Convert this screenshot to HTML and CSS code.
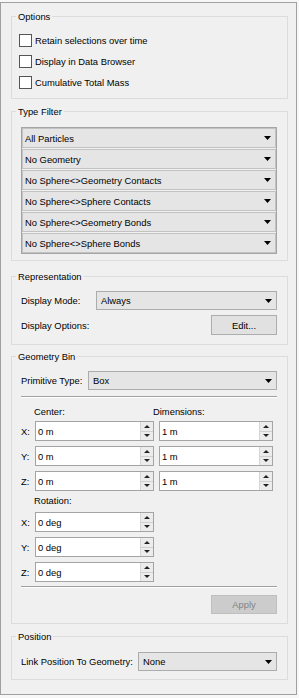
FILE: index.html
```html
<!DOCTYPE html>
<html>
<head>
<meta charset="utf-8">
<link rel="stylesheet" href="styles.css">
</head>
<body>
<div class="panel">
  <fieldset class="group g-options">
    <legend>Options</legend>
    <div class="gbody options-body">
      <label class="check"><span class="box"></span>Retain selections over time</label>
      <label class="check"><span class="box"></span>Display in Data Browser</label>
      <label class="check"><span class="box"></span>Cumulative Total Mass</label>
    </div>
  </fieldset>

  <fieldset class="group g-filter">
    <legend>Type Filter</legend>
    <div class="gbody filter-body">
      <div class="stack">
        <div class="combo"><span>All Particles</span><svg class="arrow" width="7" height="4" viewBox="0 0 7 4"><path d="M0 0H7L3.5 4Z"/></svg></div>
        <div class="combo"><span>No Geometry</span><svg class="arrow" width="7" height="4" viewBox="0 0 7 4"><path d="M0 0H7L3.5 4Z"/></svg></div>
        <div class="combo"><span>No Sphere&lt;&gt;Geometry Contacts</span><svg class="arrow" width="7" height="4" viewBox="0 0 7 4"><path d="M0 0H7L3.5 4Z"/></svg></div>
        <div class="combo"><span>No Sphere&lt;&gt;Sphere Contacts</span><svg class="arrow" width="7" height="4" viewBox="0 0 7 4"><path d="M0 0H7L3.5 4Z"/></svg></div>
        <div class="combo"><span>No Sphere&lt;&gt;Geometry Bonds</span><svg class="arrow" width="7" height="4" viewBox="0 0 7 4"><path d="M0 0H7L3.5 4Z"/></svg></div>
        <div class="combo"><span>No Sphere&lt;&gt;Sphere Bonds</span><svg class="arrow" width="7" height="4" viewBox="0 0 7 4"><path d="M0 0H7L3.5 4Z"/></svg></div>
      </div>
    </div>
  </fieldset>

  <fieldset class="group g-repr">
    <legend>Representation</legend>
    <div class="gbody repr-body">
      <div class="row">
        <span class="lbl lbl-repr">Display Mode:</span>
        <div class="combo single grow"><span>Always</span><svg class="arrow" width="7" height="4" viewBox="0 0 7 4"><path d="M0 0H7L3.5 4Z"/></svg></div>
      </div>
      <div class="row row-edit">
        <span class="lbl grow">Display Options:</span>
        <button class="btn">Edit...</button>
      </div>
    </div>
  </fieldset>

  <fieldset class="group g-geom">
    <legend>Geometry Bin</legend>
    <div class="gbody geom-body">
      <div class="row">
        <span class="lbl lbl-prim">Primitive Type:</span>
        <div class="combo single grow"><span>Box</span><svg class="arrow" width="7" height="4" viewBox="0 0 7 4"><path d="M0 0H7L3.5 4Z"/></svg></div>
      </div>
      <div class="sep sep-top"></div>
      <div class="grid grid-xyz">
        <span></span><span class="head">Center:</span><span class="head">Dimensions:</span>
        <span class="axis">X:</span>
        <div class="spin"><span class="val">0 m</span><span class="btns"><span class="up"></span><span class="down"></span></span></div>
        <div class="spin dim"><span class="val">1 m</span><span class="btns"><span class="up"></span><span class="down"></span></span></div>
        <span class="axis">Y:</span>
        <div class="spin"><span class="val">0 m</span><span class="btns"><span class="up"></span><span class="down"></span></span></div>
        <div class="spin dim"><span class="val">1 m</span><span class="btns"><span class="up"></span><span class="down"></span></span></div>
        <span class="axis">Z:</span>
        <div class="spin"><span class="val">0 m</span><span class="btns"><span class="up"></span><span class="down"></span></span></div>
        <div class="spin dim"><span class="val">1 m</span><span class="btns"><span class="up"></span><span class="down"></span></span></div>
      </div>
      <div class="grid grid-rot">
        <span></span><span class="head">Rotation:</span>
        <span class="axis">X:</span>
        <div class="spin"><span class="val">0 deg</span><span class="btns"><span class="up"></span><span class="down"></span></span></div>
        <span class="axis">Y:</span>
        <div class="spin"><span class="val">0 deg</span><span class="btns"><span class="up"></span><span class="down"></span></span></div>
        <span class="axis">Z:</span>
        <div class="spin"><span class="val">0 deg</span><span class="btns"><span class="up"></span><span class="down"></span></span></div>
      </div>
      <div class="sep sep-bot"></div>
      <div class="row row-apply">
        <button class="btn disabled">Apply</button>
      </div>
    </div>
  </fieldset>

  <fieldset class="group g-pos">
    <legend>Position</legend>
    <div class="gbody pos-body">
      <div class="row">
        <span class="lbl lbl-pos">Link Position To Geometry:</span>
        <div class="combo single grow"><span>None</span><svg class="arrow" width="7" height="4" viewBox="0 0 7 4"><path d="M0 0H7L3.5 4Z"/></svg></div>
      </div>
    </div>
  </fieldset>
</div>
</body>
</html>
```

FILE: styles.css
```css
* { box-sizing: border-box; }
html, body { margin: 0; padding: 0; }
body {
  background: #f7f7f7;
  font-family: "Liberation Sans", Arial, sans-serif;
  font-size: 9.4px;
  color: #000;
}
.panel {
  margin-top: 2px;
  width: 297px;
  height: 693px;
  border: 1px solid #a0a0a0;
  background: #f0f0f0;
  padding: 7px 8px 0 10px;
}
.group {
  margin: 0;
  padding: 0;
  min-width: 0;
  border: 1px solid #dcdcdc;
}
.group legend {
  margin-left: 4px;
  padding: 0 2px;
  line-height: 13px;
  height: 13px;
}
.g-filter { margin-top: 6px; }
.g-repr { margin-top: 9px; }
.g-geom { margin-top: 5px; }
.g-pos { margin-top: 6px; }

.gbody { padding-left: 9px; padding-right: 10px; }

.options-body { padding: 7px 9px 5px 7px; }
.check {
  display: flex;
  align-items: center;
  height: 21px;
}
.check .box {
  width: 13px;
  height: 13px;
  border: 1px solid #555;
  background: #fff;
  margin-right: 3px;
  flex: none;
}

.filter-body { padding-top: 9px; padding-bottom: 6px; }
.stack {
  border: 1px solid #a5a5a5;
  display: grid;
  grid-template-rows: repeat(6, 20px);
  row-gap: 1px;
  background: #f0f0f0;
}
.combo {
  display: flex;
  align-items: center;
  justify-content: space-between;
  height: 20px;
  border: 1px solid #c2c2c2;
  background: #e5e5e5;
  padding: 0 4px 0 2px;
}
.combo.single {
  height: 19px;
  border-color: #acacac;
  padding-left: 4px;
}
.arrow { flex: none; fill: #000; }

.row { display: flex; align-items: center; }
.grow { flex: 1; }
.lbl-repr { width: 75px; flex: none; }
.lbl-prim { width: 67px; flex: none; }
.lbl-pos { width: 117px; flex: none; }

.repr-body { padding-top: 8px; padding-bottom: 9px; }
.row-edit { margin-top: 5px; }
.btn {
  font: inherit;
  color: #000;
  width: 66px;
  height: 20px;
  border: 1px solid #adadad;
  background: #e1e1e1;
  padding: 0;
  margin: 0;
}
.btn.disabled {
  height: 19px;
  background: #cccccc;
  border-color: #bfbfbf;
  color: #838383;
}

.geom-body { padding-top: 8px; padding-bottom: 9px; }
.sep {
  height: 2px;
  border-top: 1px solid #a0a0a0;
  border-bottom: 1px solid #fff;
}
.sep-top { margin-top: 6px; }
.grid {
  display: grid;
  grid-template-columns: 14px 119px 119px;
  row-gap: 5px;
  margin-top: 7px;
}
.grid .spin.dim { margin-left: 5px; width: 114px; }
.grid .head {
  height: 14px;
  line-height: 14px;
  margin-bottom: -3px;
  margin-left: -1px;
}
.grid .axis { display: flex; align-items: center; }
.grid-rot {
  grid-template-columns: 14px 119px;
  margin-top: 4px;
}
.grid-rot .head { height: 12px; line-height: 12px; margin-bottom: 0; }
.spin {
  display: flex;
  height: 20px;
  border: 1px solid #a4a4a4;
  background: #fff;
}
.spin .val {
  flex: 1;
  display: flex;
  align-items: center;
  padding-left: 2px;
}
.spin .btns {
  width: 13px;
  display: flex;
  flex-direction: column;
  border-left: 1px solid #d6d6d6;
  background: #ececec;
}
.spin .up, .spin .down {
  flex: 1;
  display: flex;
  align-items: center;
  justify-content: center;
}
.spin .up { border-bottom: 1px solid #d0d0d0; }
.spin .up::before {
  content: "";
  border-left: 3px solid transparent;
  border-right: 3px solid transparent;
  border-bottom: 3px solid #222;
}
.spin .down::before {
  content: "";
  border-left: 3px solid transparent;
  border-right: 3px solid transparent;
  border-top: 3px solid #222;
}
.sep-bot { margin-top: 4px; }
.row-apply { justify-content: flex-end; margin-top: 7px; }

.pos-body { padding-top: 9px; padding-bottom: 8px; }
```
